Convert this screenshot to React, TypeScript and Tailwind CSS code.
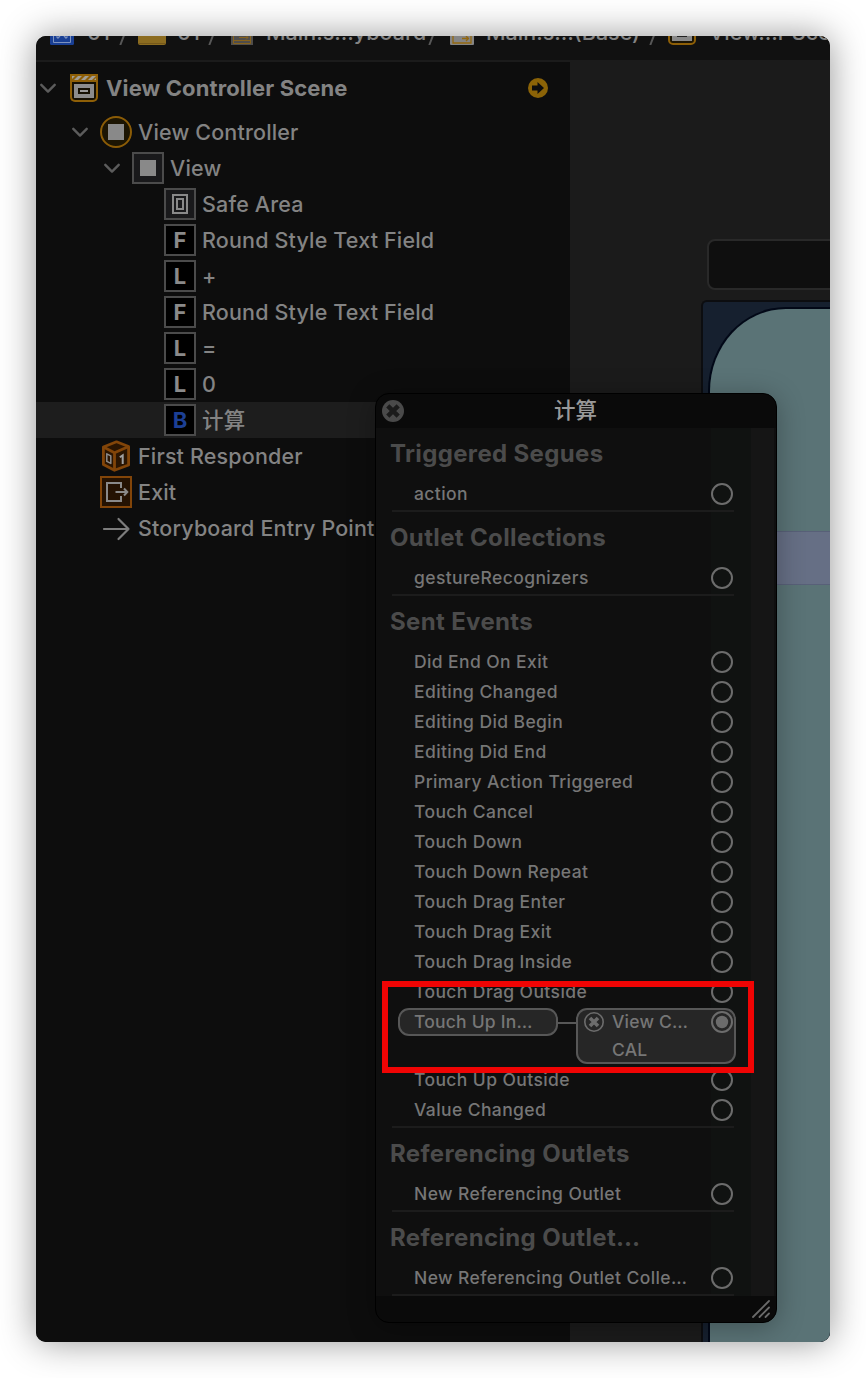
import type { ReactNode } from "react";

const Chevron = () => (
  <svg className="block h-[10px] w-4 shrink-0" viewBox="0 0 16 10" fill="none" stroke="#5c5c5c" strokeWidth="2.400" strokeLinecap="round" strokeLinejoin="round">
    <path d="M1.300 1.800 8 8.600l6.700-6.800" />
  </svg>
);

const SceneIcon = () => (
  <svg className="block h-7 w-7 shrink-0" viewBox="0 0 28 28">
    <path d="M0 0H28V23a5 5 0 0 1-5 5H5a5 5 0 0 1-5-5Z" fill="#8e5f07" />
    <path d="M2 8H26V22.500a3.500 3.500 0 0 1-3.500 3.500H5.500A3.500 3.500 0 0 1 2 22.500Z" fill="#151003" />
    <path d="M2 2h3L2 5ZM8 2h4L8 6H4ZM15 2h4l-4 4h-4ZM22 2h4l-4 4h-4ZM26 4v2h-2Z" fill="#a09d96" />
    <path d="M4 10H24V24H4Z" fill="#8c8c8c" />
    <rect x="9" y="15" width="10" height="4" fill="#999" stroke="#151003" strokeWidth="2" />
  </svg>
);

const ControllerIcon = () => (
  <svg className="block h-8 w-8 shrink-0" viewBox="0 0 32 32">
    <circle cx="16" cy="16" r="15" fill="#1c1503" stroke="#8b5c07" strokeWidth="2" />
    <rect x="8" y="8" width="16" height="16" fill="#898989" />
  </svg>
);

const ViewIcon = () => (
  <svg className="block h-8 w-8 shrink-0" viewBox="0 0 32 32">
    <rect x="1" y="1" width="30" height="30" fill="#19191b" stroke="#4b4b4b" strokeWidth="2" />
    <rect x="8" y="8" width="16" height="16" fill="#898989" />
  </svg>
);

const SafeAreaIcon = () => (
  <svg className="block h-8 w-8 shrink-0" viewBox="0 0 32 32">
    <rect x="1" y="1" width="30" height="30" fill="#19191b" stroke="#4b4b4b" strokeWidth="2" />
    <g fill="none" stroke="#898989" strokeWidth="2">
      <rect x="9" y="7" width="14" height="18" />
      <rect x="13" y="11" width="6" height="10" />
    </g>
  </svg>
);

const Letter = ({ c, blue }: { c: string; blue?: boolean }) => (
  <div className={`flex h-8 w-8 shrink-0 items-center justify-center border-2 border-[#4b4b4b] bg-black text-[22px] leading-none font-bold ${blue ? "text-[#1c3f94]" : "text-[#8a8a8a]"}`}>
    {c}
  </div>
);

const ResponderIcon = () => (
  <svg className="block h-8 w-8 shrink-0" viewBox="0 0 32 32" fill="#2a1502" stroke="#824509" strokeWidth="2.800" strokeLinejoin="round">
    <path d="M16.500 1.800 28.600 6.500V25L14.500 30.300 3.400 24.500V7Z" />
    <path d="M3.400 7l11.100 5.800L28.600 6.500M14.500 12.800v17" fill="none" />
    <path d="M6.800 13.800l4 2v7.600l-4-2Z" fill="none" stroke="#8c8c8c" strokeWidth="1.500" />
    <path d="M19.800 17.300l2.900-2V24" fill="none" stroke="#a0a0a0" strokeWidth="2" strokeLinejoin="miter" />
  </svg>
);

const ExitIcon = () => (
  <svg className="block h-8 w-8 shrink-0" viewBox="0 0 32 32">
    <rect x="1" y="1" width="30" height="30" fill="#241202" stroke="#824509" strokeWidth="2" />
    <path d="M21 12V7H7v18h14v-5" fill="none" stroke="#8a8a8a" strokeWidth="2" />
    <path d="M15.500 16H27M24 12.500 27.300 16 24 19.500" fill="none" stroke="#8a8a8a" strokeWidth="2" />
  </svg>
);

const EntryIcon = () => (
  <svg className="block h-8 w-8 shrink-0" viewBox="0 0 32 32" fill="none" stroke="#7d7d7d" strokeWidth="2.200" strokeLinecap="round" strokeLinejoin="round">
    <path d="M4 17H28.500M18.500 7 28.500 17l-10 10" />
  </svg>
);

type Row = { pad: string; open?: boolean; icon: ReactNode; text: string; selected?: boolean };

const rows: Row[] = [
  { pad: "pl-9", open: true, icon: <ControllerIcon />, text: "View Controller" },
  { pad: "pl-[68px]", open: true, icon: <ViewIcon />, text: "View" },
  { pad: "pl-32", icon: <SafeAreaIcon />, text: "Safe Area" },
  { pad: "pl-32", icon: <Letter c="F" />, text: "Round Style Text Field" },
  { pad: "pl-32", icon: <Letter c="L" />, text: "+" },
  { pad: "pl-32", icon: <Letter c="F" />, text: "Round Style Text Field" },
  { pad: "pl-32", icon: <Letter c="L" />, text: "=" },
  { pad: "pl-32", icon: <Letter c="L" />, text: "0" },
  { pad: "pl-32", icon: <Letter c="B" blue />, text: "计算", selected: true },
  { pad: "pl-16", icon: <ResponderIcon />, text: "First Responder" },
  { pad: "pl-16", icon: <ExitIcon />, text: "Exit" },
  { pad: "pl-16", icon: <EntryIcon />, text: "Storyboard Entry Point" },
];

const Outline = () => (
  <div className="w-[534px] shrink-0 bg-[#0d0d0d] text-[#838383]">
    <div className="flex h-[52px] items-center pl-1">
      <Chevron />
      <div className="ml-[14px]"><SceneIcon /></div>
      <span className="ml-2 w-[422px] text-[22px] leading-none font-bold tracking-[0.12px]">View Controller Scene</span>
      <svg className="block h-5 w-5 shrink-0" viewBox="0 0 20 20">
        <circle cx="10" cy="10" r="10" fill="#8b6307" />
        <path d="M4 7.500h5.500V4l6.500 6-6.500 6v-3.500H4Z" fill="#0d0d0d" />
      </svg>
    </div>
    {rows.map((r, i) => (
      <div key={i} className={`flex h-9 items-center ${r.pad} ${r.selected ? "bg-[#1d1d1d]" : ""}`}>
        {r.open && <div className="mr-3"><Chevron /></div>}
        {r.icon}
        <span className="ml-[6px] pt-[2px] text-[21.5px] leading-none font-medium tracking-[0.16px] whitespace-nowrap">{r.text}</span>
      </div>
    ))}
  </div>
);

const Canvas = () => (
  <div className="flex min-w-0 flex-1 flex-col overflow-hidden bg-[#1b1b1b] pt-[177px]">
    <div className="ml-[137px] h-[51px] w-[200px] shrink-0 rounded-lg border-2 border-[#292929] bg-[#0f0f0f]" />
    <div className="mt-[10px] ml-[131px] w-[300px] flex-1 rounded-tl-md border-t-2 border-l-2 border-[#0c0d10] bg-[#16202f] pt-[5px] pl-[5px]">
      <div className="h-full overflow-hidden rounded-tl-[78px_84px] border-t-2 border-l-2 border-[#020817] bg-[#5a7376] pt-[222px]">
        <div className="h-[54px] border-y border-[#586078] bg-[#666f85]" />
      </div>
    </div>
  </div>
);

const Slash = ({ w }: { w: string }) => (
  <div className={`flex shrink-0 ${w}`}>
    <svg className="block h-6 w-[10px]" viewBox="0 0 10 24" stroke="#575757" strokeWidth="2" strokeLinecap="round">
      <path d="M1.500 23.500 9 4" />
    </svg>
  </div>
);

const Crumb = ({ w, children }: { w: string; children: ReactNode }) => (
  <span className={`block shrink-0 text-[21.5px] leading-[23px] font-medium whitespace-nowrap text-[#838383] ${w}`}>{children}</span>
);

const PathBar = () => (
  <div className="h-[26px] overflow-hidden border-b-2 border-[#1b1b1b] bg-[#111]">
    <div className="-mt-[15px] flex h-6 pl-[14px]">
      <svg className="block h-6 w-[37px] shrink-0" viewBox="0 0 37 24">
        <rect width="24" height="24" rx="1.500" fill="#193f94" />
        <path d="M3.500 3V21.500H20.500V3" fill="none" stroke="#7d92bf" />
        <path d="M6.500 15.500l1.500 1.500 2-2M14 15l2 2 1.500-1.500" fill="none" stroke="#7c91bd" strokeWidth="1.400" />
      </svg>
      <Crumb w="w-8">01</Crumb>
      <Slash w="w-[19px]" />
      <svg className="block h-6 w-[39px] shrink-0" viewBox="0 0 39 24">
        <rect y="2" width="28" height="22" rx="2" fill="#8c6c20" />
        <path d="M1 22.500H27" stroke="#75581a" />
      </svg>
      <Crumb w="w-[31px]">01</Crumb>
      <Slash w="w-[23px]" />
      <svg className="block h-6 w-[35px] shrink-0" viewBox="0 0 35 24">
        <rect width="22" height="24" fill="#4f4d4b" />
        <path d="M2.500 4h17v18.500h-17ZM2.500 19.500h17M8 16.500h9M15 14.500l2 2-2 2" fill="none" stroke="#86621c" />
      </svg>
      <Crumb w="w-[162px]">Main.s…yboard</Crumb>
      <Slash w="w-[22px]" />
      <svg className="block h-6 w-9 shrink-0" viewBox="0 0 36 24">
        <rect width="24" height="24" rx="1" fill="#858585" />
        <path d="M3 3h18v19H3ZM12 17.500h6M16 15l2.500 2.500L16 20" fill="none" stroke="#94680f" strokeWidth="1.300" />
      </svg>
      <Crumb w="w-[163px]">Main.s…(Base)</Crumb>
      <Slash w="w-[19px]" />
      <svg className="block h-6 w-[41px] shrink-0" viewBox="0 0 41 24">
        <path d="M1 0V19a4 4 0 0 0 4 4H23a4 4 0 0 0 4-4V0" fill="#1c1504" stroke="#8e5f07" strokeWidth="2" />
        <path d="M4 2h20v18H4Z" fill="#898989" />
        <path d="M9 15H19" stroke="#222" strokeWidth="2" />
      </svg>
      <Crumb w="w-[160px]">View…r Scene</Crumb>
    </div>
  </div>
);

const Ring = ({ filled }: { filled?: boolean }) => (
  <svg className="block h-[22px] w-[22px] shrink-0" viewBox="0 0 22 22">
    <circle cx="11" cy="11" r="10" fill="none" stroke="#6c6c6c" strokeWidth="2" />
    {filled && <circle cx="11" cy="11" r="6.200" fill="#6c6c6c" />}
  </svg>
);

const Item = ({ text }: { text: string }) => (
  <div className="flex h-[30px] items-center justify-between pr-[1px] pl-[22px]">
    <span className="text-[17.5px] leading-none font-medium tracking-[0.4px] whitespace-nowrap text-[#767676]">{text}</span>
    <Ring />
  </div>
);

const Section = ({ title, children }: { title: string; children: ReactNode }) => (
  <div className="border-b-2 border-[#1c1c1c]">
    <div className="-ml-[2px] flex h-[51px] items-center text-[24px] leading-none font-bold tracking-[0.35px] text-[#4b4b4b]">{title}</div>
    <div className="pb-[1px]">{children}</div>
  </div>
);

const events = [
  "Did End On Exit", "Editing Changed", "Editing Did Begin", "Editing Did End", "Primary Action Triggered",
  "Touch Cancel", "Touch Down", "Touch Down Repeat", "Touch Drag Enter", "Touch Drag Exit", "Touch Drag Inside", "Touch Drag Outside",
];

const Connection = () => (
  <div className="-mr-[2px] ml-[6px] flex h-[58px] items-start pt-[1px] text-[17.5px] leading-none font-medium tracking-[0.2px] text-[#767676]">
    <div className="flex h-7 w-[160px] shrink-0 items-center rounded-[11px] border-2 border-[#575757] bg-[#262626] pl-[14px]">Touch Up In…</div>
    <div className="mt-[14px] h-[2px] w-[18px] shrink-0 bg-[#575757]" />
    <div className="h-14 w-[160px] shrink-0 rounded-[11px] border-2 border-[#575757] bg-[#262626]">
      <div className="flex h-6 items-center pl-[6px]">
        <svg className="block h-5 w-5 shrink-0" viewBox="0 0 20 20" stroke="#6c6c6c">
          <circle cx="10" cy="10" r="9.200" fill="none" strokeWidth="1.600" />
          <path d="M6 6l8 8M14 6l-8 8" strokeWidth="3.600" />
        </svg>
        <span className="ml-2 w-[99px]">View C…</span>
        <Ring filled />
      </div>
      <div className="flex h-8 items-center pl-[34px]">CAL</div>
    </div>
  </div>
);

const Hud = () => (
  <div className="absolute top-[357px] left-[339px] flex h-[930px] w-[402px] flex-col overflow-hidden rounded-[14px] border border-black bg-[#0a0a0a] shadow-[0_4px_28px_rgba(0,0,0,0.3)]">
    <div className="flex h-[34px] shrink-0 items-center pl-[6px]">
      <svg className="block h-[22px] w-[22px] shrink-0" viewBox="0 0 22 22">
        <circle cx="11" cy="11" r="11" fill="#4a4a4a" />
        <path d="M5.800 5.800 16.200 16.200M16.200 5.800 5.800 16.200" stroke="#1b1b1b" strokeWidth="4.500" />
      </svg>
      <span className="ml-[150px] text-[21.5px] leading-none font-medium text-[#999]">计算</span>
    </div>
    <div className="flex h-[868px] shrink-0 bg-[#0f0f0f]">
      <div className="w-[375px] shrink-0 bg-[linear-gradient(90deg,#0f0f0f_335px,#101211_335px)] pr-[17px] pl-4">
        <Section title="Triggered Segues"><Item text="action" /></Section>
        <Section title="Outlet Collections"><Item text="gestureRecognizers" /></Section>
        <Section title="Sent Events">
          {events.map((e) => <Item key={e} text={e} />)}
          <Connection />
          <Item text="Touch Up Outside" />
          <Item text="Value Changed" />
        </Section>
        <Section title="Referencing Outlets"><Item text="New Referencing Outlet" /></Section>
        <Section title="Referencing Outlet…"><Item text="New Referencing Outlet Colle…" /></Section>
      </div>
      <div className="mr-[2px] flex-1 bg-[#151515]" />
    </div>
    <div className="flex flex-1 items-start justify-end pt-[4px] pr-[6px]">
      <svg className="block h-[18px] w-[18px]" viewBox="0 0 18 18" stroke="#6a6a6a" strokeWidth="1.800" strokeLinecap="round">
        <path d="M1 17 17 1M7.500 17 17 7.500M13.500 17l3.500-3.500" />
      </svg>
    </div>
  </div>
);

export default function App() {
  return (
    <div className="h-[1378px] w-[866px] overflow-hidden bg-white p-9 font-['Inter','Noto_Sans_CJK_SC',sans-serif]">
      <div className="h-[1306px] w-[794px] rounded-[10px] shadow-[0_0_36px_rgba(0,0,0,0.42)]">
        <div className="relative flex h-full flex-col overflow-hidden rounded-[10px] bg-[#0d0d0d]">
          <PathBar />
          <div className="flex min-h-0 flex-1">
            <Outline />
            <Canvas />
          </div>
          <Hud />
          <div className="absolute top-[945px] left-[346px] h-[92px] w-[372px] border-6 border-[#f00404]" />
        </div>
      </div>
    </div>
  );
}
